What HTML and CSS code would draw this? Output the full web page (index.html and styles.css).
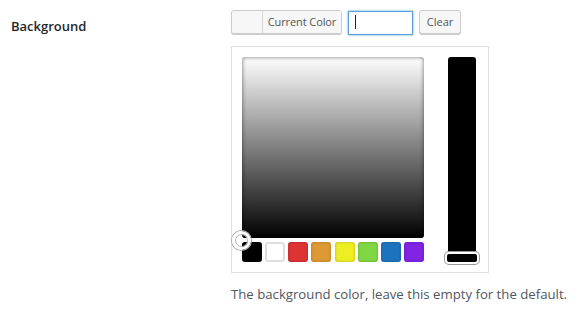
FILE: index.html
```html
<!DOCTYPE html>
<html>
<head>
<meta charset="utf-8">
<link rel="stylesheet" href="styles.css">
</head>
<body>
<div class="row">
  <div class="label">Background</div>
  <div class="field">
    <div class="toolbar">
      <button class="btn current"><span class="swatch-preview"></span><span class="btn-text">Current Color</span></button>
      <div class="input-wrap"><input class="color-input" type="text" value=""><span class="caret"></span></div>
      <button class="btn clear">Clear</button>
    </div>
    <div class="picker">
      <div class="left">
        <div class="square"></div>
        <div class="palette">
          <span class="pal black"></span>
          <span class="pal white"></span>
          <span class="pal red"></span>
          <span class="pal orange"></span>
          <span class="pal yellow"></span>
          <span class="pal green"></span>
          <span class="pal blue"></span>
          <span class="pal purple"></span>
        </div>
        <span class="square-handle"></span>
      </div>
      <div class="strip">
        <span class="strip-handle"></span>
      </div>
    </div>
    <p class="desc">The background color, leave this empty for the default.</p>
  </div>
</div>
</body>
</html>
```
FILE: styles.css
```css
* { box-sizing: border-box; }
html, body { margin: 0; padding: 0; background: #fff; }
body {
  font-family: "Open Sans", "Noto Sans", sans-serif;
  color: #444;
  width: 584px;
  height: 316px;
  overflow: hidden;
}
.row {
  display: flex;
}
.label {
  width: 231px;
  padding: 16px 0 0 11px;
  font-size: 13px;
  font-weight: 600;
  color: #23282d;
  line-height: 20px;
}
.field {
  padding-top: 10px;
}
.toolbar {
  display: flex;
  gap: 6px;
  height: 24px;
}
.btn {
  font-family: inherit;
  font-size: 11px;
  color: #555;
  background: #f7f7f7;
  border: 1px solid #cccccc;
  border-radius: 3px;
  box-shadow: 0 1px 0 #cccccc;
  height: 24px;
  padding: 0;
  margin: 0;
  line-height: 20px;
  display: flex;
  align-items: stretch;
}
.current {
  width: 111px;
}
.swatch-preview {
  width: 31px;
  border-right: 1px solid #d6d6d6;
  background: #f7f7f7;
  border-radius: 2px 0 0 2px;
}
.btn-text {
  flex: 1;
  text-align: center;
  line-height: 22px;
  background: #f7f7f7;
  letter-spacing: -0.1px;
}
.clear {
  width: 42px;
  justify-content: center;
  line-height: 22px;
}
.input-wrap {
  position: relative;
  width: 65px;
  height: 24px;
}
.color-input {
  width: 65px;
  height: 24px;
  margin: 0;
  border: 1px solid #5b9dd9;
  box-shadow: 0 0 2px rgba(30, 140, 190, 0.8);
  border-radius: 0;
  padding: 0 6px;
  outline: none;
  background: #fff;
}
.caret {
  position: absolute;
  left: 7px;
  top: 5px;
  width: 1px;
  height: 14px;
  background: #222;
}
.picker {
  margin-top: 12px;
  width: 258px;
  height: 227px;
  border: 1px solid #dedede;
  padding: 10px;
  display: flex;
  gap: 24px;
}
.left {
  position: relative;
  width: 182px;
}
.square {
  width: 182px;
  height: 181px;
  border-radius: 3px;
  background: linear-gradient(to bottom, #ffffff 0%, #000000 100%);
  box-shadow: inset 0 0 4px rgba(0, 0, 0, 0.55);
}
.palette {
  margin-top: 4px;
  display: flex;
  justify-content: space-between;
}
.pal {
  width: 20px;
  height: 20px;
  border-radius: 3px;
  box-shadow: inset 0 0 3px rgba(0, 0, 0, 0.25);
}
.black { background: #000; }
.white { background: #fff; box-shadow: inset 0 0 0 2px #dddddd; }
.red { background: #dd3333; }
.orange { background: #dd9933; }
.yellow { background: #eeee22; }
.green { background: #81d742; }
.blue { background: #1e73be; }
.purple { background: #8224e3; }
.square-handle {
  position: absolute;
  left: -10px;
  top: 174px;
  width: 19px;
  height: 19px;
  border-radius: 50%;
  border: 3px solid #fff;
  box-shadow: 0 0 0 1px #aaa, inset 0 0 0 1px #aaa;
}
.strip {
  position: relative;
  width: 28px;
  height: 199px;
  background: #000;
  border-radius: 3px;
}
.strip-handle {
  position: absolute;
  left: -3px;
  top: 195px;
  width: 34px;
  height: 12px;
  border: 2px solid #fff;
  border-radius: 4px;
  box-shadow: 0 0 0 1px #999;
  background: #000;
}
.desc {
  margin: 12px 0 0 0;
  font-size: 13.2px;
  line-height: 19px;
  color: #50575e;
}
```
